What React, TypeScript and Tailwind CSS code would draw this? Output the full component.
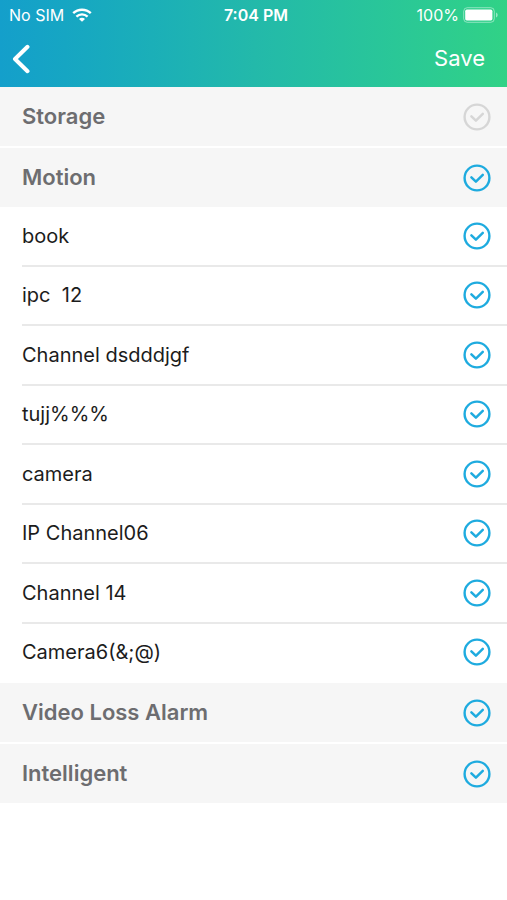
import React, { useState } from 'react';

interface Channel {
  id: string;
  name: string;
}

interface Section {
  id: string;
  title: string;
  channels: Channel[];
}

const sections: Section[] = [
  { id: 'storage', title: 'Storage', channels: [] },
  {
    id: 'motion',
    title: 'Motion',
    channels: [
      { id: 'ch1', name: 'book' },
      { id: 'ch2', name: 'ipc  12' },
      { id: 'ch3', name: 'Channel dsdddjgf' },
      { id: 'ch4', name: 'tujj%%%' },
      { id: 'ch5', name: 'camera' },
      { id: 'ch6', name: 'IP Channel06' },
      { id: 'ch7', name: 'Channel 14' },
      { id: 'ch8', name: 'Camera6(&;@)' },
    ],
  },
  { id: 'videoloss', title: 'Video Loss Alarm', channels: [] },
  { id: 'intelligent', title: 'Intelligent', channels: [] },
];

const allIds = sections.flatMap((s) => [s.id, ...s.channels.map((c) => c.id)]);

function WifiIcon() {
  return (
    <svg viewBox="0 0 20 14" className="h-[14px] w-5" fill="none" stroke="currentColor" strokeWidth="2.4" aria-hidden="true">
      <path d="M1.2 5.2C6 0.6 14 0.6 18.8 5.2" />
      <path d="M4.4 8.6C7.6 5.6 12.4 5.6 15.6 8.6" />
      <path d="M7 10.9C8.7 9.3 11.3 9.3 13 10.9L10 13.8Z" fill="currentColor" stroke="none" />
    </svg>
  );
}

function BatteryIcon() {
  return (
    <svg viewBox="0 0 36 16" className="h-4 w-9" fill="none" aria-hidden="true">
      <rect x="0.7" y="0.7" width="30.6" height="14.6" rx="3.6" stroke="white" strokeOpacity="0.45" strokeWidth="1" />
      <rect x="2.2" y="2.6" width="27.2" height="10.8" rx="1.6" fill="white" />
      <path d="M33 5.6C35.2 6.4 35.2 9.8 33 10.6Z" fill="white" fillOpacity="0.5" />
    </svg>
  );
}

function CheckMark() {
  return (
    <svg
      viewBox="0 0 28 28"
      className="h-7 w-7 shrink-0 text-[#d6d6d6] peer-checked:text-[#1eabdf]"
      fill="none"
      stroke="currentColor"
      strokeWidth="2.4"
      strokeLinecap="round"
      strokeLinejoin="round"
      aria-hidden="true"
    >
      <circle cx="14" cy="14" r="12.4" />
      <path d="M8.4 13.3L12.9 17.6L19.8 10.8" strokeWidth="2.5" />
    </svg>
  );
}

export default function App() {
  const [selected, setSelected] = useState<string[]>(allIds.filter((id) => id !== 'storage'));

  const toggle = (id: string) =>
    setSelected((prev) => (prev.includes(id) ? prev.filter((x) => x !== id) : [...prev, id]));

  return (
    <div className="min-h-screen bg-white font-['Inter','Liberation_Sans',sans-serif]">
      <header className="bg-linear-to-r from-[#149fcb] via-[#23b9aa] to-[#31d286] text-white">
        <div className="grid h-[30px] grid-cols-3 items-center pr-2 pl-[9px] text-base">
          <div className="flex items-center gap-2">
            <span>No SIM</span>
            <WifiIcon />
          </div>
          <span className="pl-1 text-center font-semibold">7:04 PM</span>
          <div className="flex items-center justify-end gap-1">
            <span>100%</span>
            <BatteryIcon />
          </div>
        </div>
        <div className="flex h-[57px] items-center justify-between pr-[22px] pl-3">
          <button type="button" aria-label="Back">
            <svg viewBox="0 0 18 30" className="h-[30px] w-[18px]" fill="none" stroke="currentColor" strokeWidth="4" strokeLinecap="round" strokeLinejoin="round" aria-hidden="true">
              <path d="M15.5 2.8L3 15L15.5 27.2" />
            </svg>
          </button>
          <button type="button" className="text-[22px]">
            Save
          </button>
        </div>
      </header>

      <main>
        {sections.map((section) => (
          <section key={section.id}>
            <label className="flex h-[59px] items-center justify-between bg-[#f6f6f6] pr-4 pl-[22px] text-[22px] font-semibold text-[#6d6d70]">
              {section.title}
              <input
                type="checkbox"
                className="peer sr-only"
                checked={selected.includes(section.id)}
                onChange={() => toggle(section.id)}
              />
              <CheckMark />
            </label>

            {section.channels.length > 0 ? (
              <ul className="grid min-h-[476px] auto-rows-fr pl-[22px]">
                {section.channels.map((ch) => (
                  <li key={ch.id} className="border-b-2 border-[#e9e9e9] last:border-transparent">
                    <label className="flex h-full items-center justify-between pr-4 text-xl whitespace-pre text-[#1c1c1c]">
                      {ch.name}
                      <input
                        type="checkbox"
                        className="peer sr-only"
                        checked={selected.includes(ch.id)}
                        onChange={() => toggle(ch.id)}
                      />
                      <CheckMark />
                    </label>
                  </li>
                ))}
              </ul>
            ) : (
              <div className="h-0.5 bg-white" />
            )}
          </section>
        ))}
      </main>
    </div>
  );
}
